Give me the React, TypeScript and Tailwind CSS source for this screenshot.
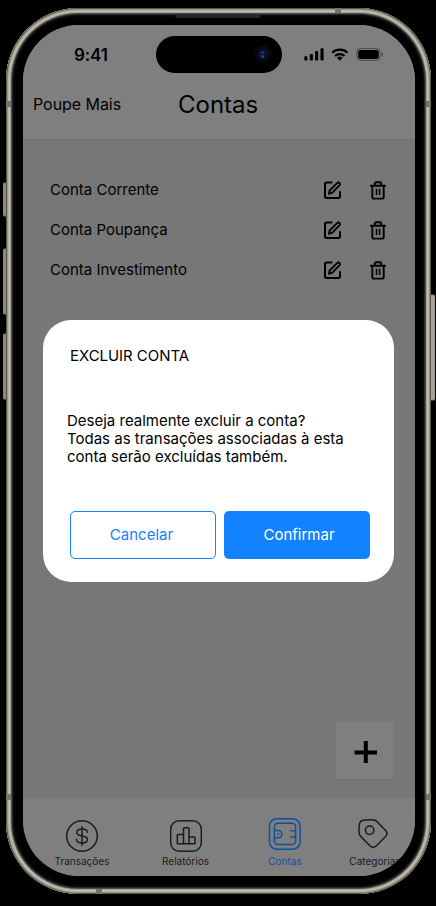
import React from "react";

const strokeIcon = {
  fill: "none",
  stroke: "currentColor",
  strokeLinecap: "round" as const,
  strokeLinejoin: "round" as const,
};

function EditIcon() {
  return (
    <svg width="20" height="20" viewBox="0 0 20 20" {...strokeIcon} strokeWidth="2">
      <path d="M9.5 2.6H4.2a1.2 1.2 0 0 0-1.2 1.2v13a1.2 1.2 0 0 0 1.2 1.2h12.6a1.2 1.2 0 0 0 1.2-1.2V12" />
      <path d="M7 13.8l.6-3.3 7.5-7.4a1.65 1.65 0 0 1 2.4 2.3L10 12.9z" strokeWidth="1.9" />
    </svg>
  );
}

function TrashIcon() {
  return (
    <svg width="18" height="20" viewBox="0 0 18 20" {...strokeIcon} strokeWidth="1.9">
      <path d="M1.9 5.7h14.2M3.3 5.9v11.1a1.6 1.6 0 0 0 1.6 1.6h8.2a1.6 1.6 0 0 0 1.6-1.6v-11.1M5.8 5.3V3.5a1.2 1.2 0 0 1 1.2-1.2h4a1.2 1.2 0 0 1 1.2 1.2v1.8" />
      <path d="M7.5 9.4v5M10.6 9.4v5" strokeWidth="1.6" />
    </svg>
  );
}

function DollarIcon() {
  return (
    <svg width="34" height="34" viewBox="0 0 34 34" {...strokeIcon} strokeWidth="1.5">
      <circle cx="17" cy="17" r="15.3" />
      <path d="M17 7.8v18.4M22.3 13.2c-.2-2-2.2-3.1-5.3-3.1-3.2 0-5.2 1.3-5.2 3.4 0 5 10.7 2 10.7 6.9 0 2.1-2.2 3.5-5.5 3.5-3.4 0-5.5-1.4-5.6-3.7" />
    </svg>
  );
}

function ChartIcon() {
  return (
    <svg width="34" height="34" viewBox="0 0 34 34" {...strokeIcon} strokeWidth="1.5">
      <rect x="1.7" y="1.7" width="30.6" height="30.6" rx="8.5" />
      <path d="M8.3 16.2a.8.8 0 0 1 .8-.8h5.4v9.3H8.3zM14.5 9.5a.8.8 0 0 1 .8-.8h3.9a.8.8 0 0 1 .8.8v15.2h-5.5zM20 18.1h5.2a.8.8 0 0 1 .8.8v5.8h-6z" />
    </svg>
  );
}

function WalletIcon() {
  return (
    <svg width="34" height="34" viewBox="0 0 34 34" {...strokeIcon} strokeWidth="1.5">
      <rect x="1.5" y="1.7" width="30.6" height="30.6" rx="7.5" />
      <rect x="6.4" y="6.3" width="21.2" height="21.2" rx="3.5" />
      <path d="M6.6 13.4h3.6a3.7 3.7 0 0 1 0 7.4H6.6M22.8 13.8h4.6M22.8 20h4.6" />
      <circle cx="10.2" cy="17.1" r=".4" />
    </svg>
  );
}

function TagIcon() {
  return (
    <svg width="34" height="34" viewBox="0 0 34 34" {...strokeIcon} strokeWidth="1.5">
      <path d="M7.2 3.2Q12.5 2.3 18 3.1Q19.7 3.4 20.8 4.5L29.7 13.5Q32.2 16.5 29.8 19.2L20.4 28.8Q17.3 31.8 14.2 29L4.8 19.6Q3.4 18.1 3.2 16Q2.7 12 3.4 7.2Q3.8 3.8 7.2 3.2Z" />
      <circle cx="13.6" cy="13.2" r="4.2" />
    </svg>
  );
}

function StatusIcons() {
  return (
    <svg width="80" height="16" viewBox="0 0 80 16" fill="#000">
      <rect x="0.3" y="9.2" width="3.1" height="4.3" rx=".9" />
      <rect x="5.8" y="7" width="3.1" height="6.5" rx=".9" />
      <rect x="11.1" y="4" width="3.1" height="9.5" rx=".9" />
      <rect x="16.5" y="1.3" width="3.1" height="12.2" rx=".9" />
      <g fill="none" stroke="#000" strokeWidth="2.2">
        <path d="M28.1 5.7a11.3 11.3 0 0 1 15.4 0" />
        <path d="M31 9a7.1 7.1 0 0 1 9.6 0" />
      </g>
      <path d="M32.9 10.7a4.3 4.3 0 0 1 5.8 0l-2.9 3z" />
      <rect x="52.8" y="1.6" width="23.3" height="11.8" rx="3.6" fill="none" stroke="#000" strokeOpacity=".42" />
      <rect x="54.2" y="3" width="20.5" height="9" rx="2.3" />
      <path d="M77.5 5.3c2 .7 2 4 0 4.7z" fillOpacity=".42" />
    </svg>
  );
}

const accounts = ["Conta Corrente", "Conta Poupança", "Conta Investimento"];

const tabs = [
  { label: "Transações", icon: <DollarIcon />, box: "w-[104px]", lift: "", active: false },
  { label: "Relatórios", icon: <ChartIcon />, box: "w-[103px]", lift: "", active: false },
  { label: "Contas", icon: <WalletIcon />, box: "w-[96px]", lift: "-mt-[2px] mb-[2px]", active: true },
  { label: "Categorias", icon: <TagIcon />, box: "w-[84px]", lift: "-mt-[2px] mb-[2px] -ml-[5px]", active: false },
];

export default function App() {
  return (
    <div className="relative h-[906px] w-[436px] overflow-hidden bg-black font-['Inter',sans-serif] text-black">
      <div className="absolute left-[3px] top-[182px] h-[35px] w-[6px] rounded-l-[2px] border-y border-[#3e3b35] bg-[#8c887b]" />
      <div className="absolute left-[3px] top-[248px] h-[67px] w-[6px] rounded-l-[2px] border-y border-[#3e3b35] bg-[#8c887b]" />
      <div className="absolute left-[3px] top-[333px] h-[67px] w-[6px] rounded-l-[2px] border-y border-[#3e3b35] bg-[#8c887b]" />
      <div className="absolute right-[1px] top-[294px] h-[107px] w-[6px] rounded-r-[2px] border-y border-[#3e3b35] bg-[#a5a193]" />

      <div className="relative ml-[6px] mt-[8px] h-[886px] w-[425px] rounded-[72px] bg-black pl-[16.5px] pt-[17px] shadow-[inset_0_0_0_1px_#5c574b,inset_0_0_0_2px_#989383,inset_0_0_0_3px_#b5b0a0,inset_0_0_0_4px_#c0bdb2,inset_0_0_0_5px_#a3a29d,inset_0_0_0_6px_#4c4c4e,inset_0_0_0_7px_#29292b,inset_0_0_3px_8px_#101012]">
        <div className="absolute left-0 top-[93px] h-[6px] w-[5px] bg-[#77736a]" />
        <div className="absolute right-0 top-[93px] h-[6px] w-[5px] bg-[#77736a]" />
        <div className="absolute left-0 top-[786px] h-[6px] w-[5px] bg-[#77736a]" />
        <div className="absolute right-0 top-[786px] h-[6px] w-[5px] bg-[#77736a]" />
        <div className="absolute right-[90px] top-0 h-[5px] w-[6px] bg-[#77736a]" />
        <div className="absolute bottom-0 left-[90px] h-[5px] w-[6px] bg-[#77736a]" />
        <div className="absolute left-[169px] top-[6px] h-[4px] w-[86px] rounded-b-[3px] bg-[#262626]" />

        <div className="flex h-[851px] w-[392.5px] flex-col overflow-hidden rounded-[56px] bg-[#777]">
          <header className="h-[114px] shrink-0 bg-[#7f7f7f]">
            <div className="flex h-[58px] items-center">
              <div className="w-[133px] pl-[51.5px] pt-[1px] text-[17px] font-semibold leading-[22px] tracking-[-0.1px]">9:41</div>
              <div className="flex h-[37px] w-[126px] items-center justify-end rounded-full bg-black pr-[10px]">
                <div className="flex h-[18px] w-[18px] items-center justify-center rounded-full bg-[#08070e]">
                  <div className="flex h-[10px] w-[10px] flex-col items-center justify-center gap-px rounded-full bg-[#111136]">
                    <span className="h-[3px] w-[3px] rounded-full bg-[#29298a]" />
                    <span className="h-[3px] w-[3px] rounded-full bg-[#174c96]" />
                  </div>
                </div>
              </div>
              <div className="ml-[22px] mt-[1px]"><StatusIcons /></div>
            </div>
            <div className="flex h-[42px] items-center">
              <div className="w-[155.5px] pl-[10.5px] text-[16px] tracking-[-0.05px]">Poupe Mais</div>
              <h1 className="pt-[2px] text-[24px] leading-[30px]">Contas</h1>
            </div>
          </header>

          <main className="flex flex-1 flex-col pt-[31px]">
            {accounts.map((name) => (
              <div key={name} className="flex h-[40px] items-center pl-[27.5px]">
                <span className="w-[272px] text-[15px]">{name}</span>
                <span className="w-[47px]"><EditIcon /></span>
                <TrashIcon />
              </div>
            ))}
            <div className="mb-[19px] mr-[22px] mt-auto flex h-[57px] w-[57px] items-center justify-center self-end bg-[#7f7f7f]">
              <svg width="24" height="24" viewBox="0 0 24 24" stroke="#000" strokeWidth="4">
                <path d="M12.8 2v22M1.5 13.5h23" />
              </svg>
            </div>
          </main>

          <nav className="flex h-[78px] shrink-0 bg-[#7f7f7f] pl-[7.5px] pt-[21px]">
            {tabs.map((t) => (
              <div
                key={t.label}
                className={`flex shrink-0 flex-col items-center ${t.box} ${t.active ? "text-[#0f519c]" : "text-[#1a1b1f]"}`}
              >
                <div className={t.lift}>{t.icon}</div>
                <span className="mt-[1px] text-[10px] leading-[14px]">{t.label}</span>
              </div>
            ))}
          </nav>
        </div>
      </div>

      <div role="dialog" className="absolute left-[43px] top-[320px] h-[262px] w-[351px] rounded-[28px] bg-white px-[24px] pt-[26px]">
        <h2 className="pl-[3px] text-[15px] leading-[20px] tracking-[-0.05px]">EXCLUIR CONTA</h2>
        <p className="mt-[46px] text-[15px] leading-[18px]">
          Deseja realmente excluir a conta?
          <br />
          Todas as transações associadas à esta
          <br />
          conta serão excluídas também.
        </p>
        <div className="mt-[45px] flex gap-[8px] pl-[3px] text-[15px]">
          <button className="h-[48px] w-[146px] rounded-[5px] border border-[#1282ff] pr-[3px] text-[#1282ff]">Cancelar</button>
          <button className="h-[48px] w-[146px] rounded-[5px] bg-[#1282ff] pl-[4px] text-white">Confirmar</button>
        </div>
      </div>
    </div>
  );
}
